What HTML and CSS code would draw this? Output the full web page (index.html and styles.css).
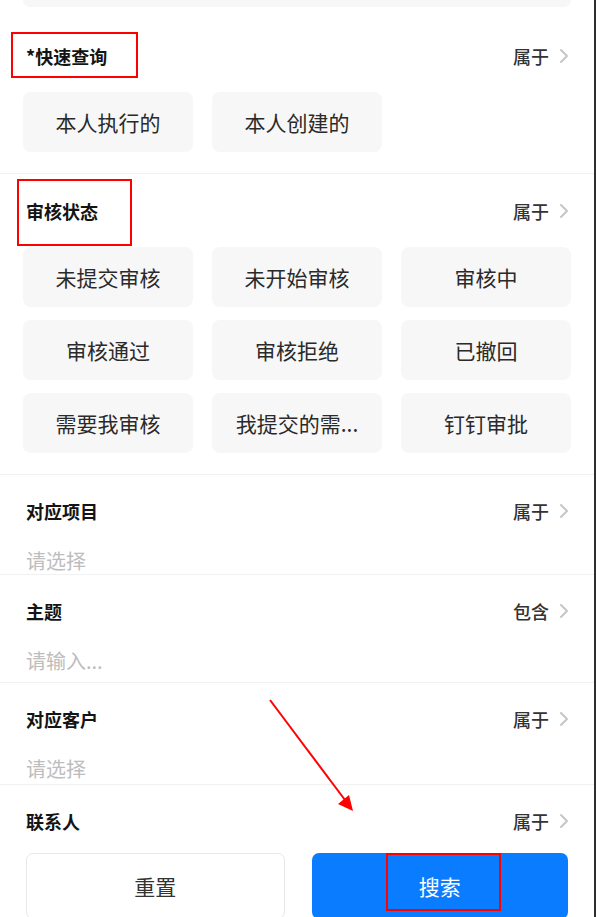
FILE: index.html
```html
<!DOCTYPE html>
<html lang="zh-CN">
<head>
    <meta charset="UTF-8">
    <meta name="viewport" content="width=device-width, initial-scale=1.0">
    <title>筛选</title>
    <link rel="stylesheet" href="styles.css">
</head>
<body>
    <div class="page">
        <div class="top-stub"></div>

        <!-- 快速查询 -->
        <section class="filter filter-first">
            <div class="filter-head">
                <span class="filter-title">*快速查询</span>
                <span class="filter-op">属于<svg class="chev" viewBox="0 0 12 16"><path d="M3 2 L9 8 L3 14"/></svg></span>
            </div>
            <div class="chips">
                <div class="chip">本人执行的</div>
                <div class="chip">本人创建的</div>
            </div>
        </section>

        <!-- 审核状态 -->
        <section class="filter">
            <div class="filter-head">
                <span class="filter-title">审核状态</span>
                <span class="filter-op">属于<svg class="chev" viewBox="0 0 12 16"><path d="M3 2 L9 8 L3 14"/></svg></span>
            </div>
            <div class="chips">
                <div class="chip">未提交审核</div>
                <div class="chip">未开始审核</div>
                <div class="chip">审核中</div>
                <div class="chip">审核通过</div>
                <div class="chip">审核拒绝</div>
                <div class="chip">已撤回</div>
                <div class="chip">需要我审核</div>
                <div class="chip">我提交的需...</div>
                <div class="chip">钉钉审批</div>
            </div>
        </section>

        <section class="field">
            <div class="filter-head">
                <span class="filter-title">对应项目</span>
                <span class="filter-op">属于<svg class="chev" viewBox="0 0 12 16"><path d="M3 2 L9 8 L3 14"/></svg></span>
            </div>
            <div class="field-value">请选择</div>
        </section>

        <section class="field field-input">
            <div class="filter-head">
                <span class="filter-title">主题</span>
                <span class="filter-op">包含<svg class="chev" viewBox="0 0 12 16"><path d="M3 2 L9 8 L3 14"/></svg></span>
            </div>
            <div class="field-value">请输入...</div>
        </section>

        <section class="field field-pad">
            <div class="filter-head">
                <span class="filter-title">对应客户</span>
                <span class="filter-op">属于<svg class="chev" viewBox="0 0 12 16"><path d="M3 2 L9 8 L3 14"/></svg></span>
            </div>
            <div class="field-value">请选择</div>
        </section>

        <section class="field field-last">
            <div class="filter-head">
                <span class="filter-title">联系人</span>
                <span class="filter-op">属于<svg class="chev" viewBox="0 0 12 16"><path d="M3 2 L9 8 L3 14"/></svg></span>
            </div>
        </section>

        <div class="footer">
            <button class="btn btn-reset">重置</button>
            <button class="btn btn-search">搜索</button>
        </div>

        <!-- 标注 -->
        <div class="mark mark-quick"></div>
        <div class="mark mark-status"></div>
        <div class="mark mark-search"></div>
        <svg class="arrow" viewBox="0 0 594 917">
            <line x1="270" y1="700" x2="345" y2="800"/>
            <polygon points="353,811 338,804 349,795"/>
        </svg>
    </div>
</body>
</html>
```

FILE: styles.css
```css
html, body {
    margin: 0;
    padding: 0;
    height: 917px;
    overflow: hidden;
    background: #fff;
}
body {
    font-family: "Noto Sans CJK SC", "Noto Sans", sans-serif;
    color: #222;
}
.page {
    position: relative;
    width: 594px;
    height: 917px;
    overflow: hidden;
    border-right: 2px solid #2e2e2e;
    background: #fff;
}
.top-stub {
    height: 7px;
    margin: 0 23px 12px;
    background: #f7f7f7;
    border-radius: 0 0 10px 10px;
}
.filter {
    padding: 25px 23px 21px;
    border-bottom: 1px solid #f1f1f1;
}
.filter-head {
    display: flex;
    align-items: center;
    justify-content: space-between;
    height: 24px;
    padding-left: 3px;
}
.filter-title {
    font-size: 18px;
    font-weight: 700;
    color: #141414;
    line-height: 24px;
}
.filter-op {
    display: flex;
    align-items: center;
    margin-right: 1px;
    font-size: 18px;
    font-weight: 500;
    color: #333;
    line-height: 24px;
}
.chev {
    width: 12px;
    height: 16px;
    margin-left: 9px;
}
.chev path {
    fill: none;
    stroke: #c6c6c6;
    stroke-width: 2;
    stroke-linecap: round;
    stroke-linejoin: round;
}
.chips {
    display: grid;
    grid-template-columns: repeat(3, 170px);
    column-gap: 19px;
    row-gap: 13px;
    margin-top: 24px;
}
.chip {
    height: 60px;
    display: flex;
    align-items: center;
    justify-content: center;
    background: #f7f7f7;
    border-radius: 8px;
    font-size: 21px;
    color: #2a2a2a;
}
.field {
    padding: 24px 23px 1px;
    border-bottom: 1px solid #f1f1f1;
}
.field-input {
    padding-bottom: 9px;
}
.field-pad {
    padding-bottom: 3px;
}
.field-last {
    border-bottom: none;
    padding-bottom: 0;
}
.field-value {
    margin-top: 26px;
    padding-left: 3px;
    font-size: 20px;
    line-height: 24px;
    color: #bdbdbd;
}
.footer {
    display: flex;
    gap: 27px;
    padding: 20px 26px 0;
}
.btn {
    flex: 1;
    height: 66px;
    border-radius: 7px;
    font-family: inherit;
    font-size: 21px;
    padding: 0;
}
.btn-reset {
    background: #fff;
    border: 1px solid #e8e8e8;
    color: #333;
}
.btn-search {
    background: #0a7cff;
    border: none;
    color: #fff;
}
.mark {
    position: absolute;
    border: 2px solid #f00;
    box-sizing: border-box;
}
.mark-quick {
    left: 11px;
    top: 32px;
    width: 127px;
    height: 46px;
}
.mark-status {
    left: 17px;
    top: 179px;
    width: 115px;
    height: 67px;
}
.mark-search {
    left: 386px;
    top: 853px;
    width: 115px;
    height: 58px;
}
.arrow {
    position: absolute;
    left: 0;
    top: 0;
    width: 594px;
    height: 917px;
    pointer-events: none;
}
.arrow line {
    stroke: #f00;
    stroke-width: 2;
}
.arrow polygon {
    fill: #f00;
}
```
